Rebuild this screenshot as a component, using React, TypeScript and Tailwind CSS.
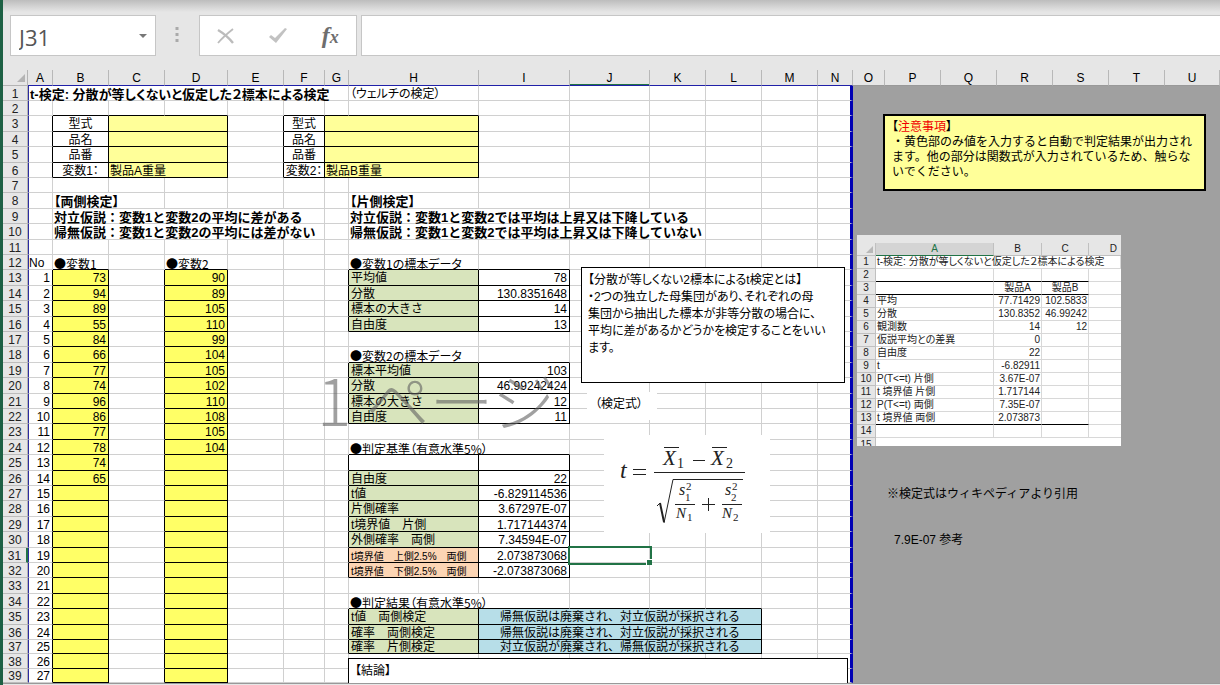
import { Fragment } from "react";

type Cell = {
  text?: string;
  span?: number;
  boxed?: boolean;
  className?: string;
};

const COLUMNS = "ABCDEFGHIJKLMNOPQRSTU".split("");
const SHEET_COLUMNS = COLUMNS.slice(0, 14);

const COLUMN_WIDTHS = [
  "w-[25px]",
  "w-[25px]",
  "w-[56px]",
  "w-[56px]",
  "w-[63px]",
  "w-[56px]",
  "w-[41px]",
  "w-[24px]",
  "w-[130px]",
  "w-[91px]",
  "w-[80px]",
  "w-[56px]",
  "w-[56px]",
  "w-[56px]",
  "w-[35px]",
  "w-[32px]",
  "w-[56px]",
  "w-[56px]",
  "w-[56px]",
  "w-[56px]",
  "w-[56px]",
  "",
];

// row heights repeat every five rows
const ROW_HEIGHTS = ["h-[15px]", "h-[15px]", "h-[16px]", "h-[15px]", "h-[16px]"];
const ROWS = Array.from({ length: 39 }, (_, i) => i + 1);

const rowHeight = (row: number) => {
  if (row === 37 || row === 39) return "h-[14px]";
  if (row > 35) return "h-[15px]";
  return ROW_HEIGHTS[(row - 1) % 5];
};

const PALE = "bg-[#ffff99] px-px";
const INPUT = "bg-[#ffff66] text-right px-[2px]";
const LABEL = "bg-[#d8e4bc] px-[2px]";
const LIMIT = "bg-[#fcd5b4] text-[10px] px-[2px]";
const RESULT = "bg-[#b7dee8] text-center px-[2px]";
const VALUE = "text-right px-[2px]";
const NARROW = "px-px [font-feature-settings:'palt']";
const HEADING =
  "px-px font-['Noto_Sans_CJK_JP',sans-serif] [font-feature-settings:'palt']";
const BOLD = "px-px font-bold text-[13px]";
const BOLD_NARROW = "px-px font-bold text-[13px] [font-feature-settings:'palt']";

const variable1 = [73, 94, 89, 55, 84, 66, 77, 74, 96, 86, 77, 78, 74, 65];
const variable2 = [90, 89, 105, 110, 99, 104, 105, 102, 110, 108, 105, 104];

const cells: Record<string, Cell> = {
  A1: {
    text: "t-検定: 分散が等しくないと仮定した２標本による検定",
    span: 7,
    className: BOLD_NARROW,
  },
  H1: { text: "（ウェルチの検定）", className: NARROW },
  B8: { text: "【両側検定】", span: 2, className: BOLD_NARROW },
  B9: { text: "対立仮説：変数1と変数2の平均に差がある", span: 5, className: BOLD },
  B10: { text: "帰無仮説：変数1と変数2の平均には差がない", span: 5, className: BOLD },
  H8: { text: "【片側検定】", className: BOLD_NARROW },
  H9: {
    text: "対立仮説：変数1と変数2では平均は上昇又は下降している",
    span: 4,
    className: BOLD,
  },
  H10: {
    text: "帰無仮説：変数1と変数2では平均は上昇又は下降していない",
    span: 4,
    className: BOLD,
  },
  A12: { text: "No", className: "px-0" },
  B12: { text: "●変数1", className: HEADING },
  D12: { text: "●変数2", className: HEADING },
  H12: { text: "●変数1の標本データ", className: HEADING },
  H18: { text: "●変数2の標本データ", className: HEADING },
  H24: { text: "●判定基準（有意水準5%）", span: 2, className: HEADING },
  H34: { text: "●判定結果（有意水準5%）", span: 2, className: HEADING },
};

["型式", "品名", "品番", "変数"].forEach((name, i) => {
  const row = i + 3;
  const last = i === 3;
  cells[`B${row}`] = {
    text: last ? "変数1：" : name,
    boxed: true,
    className: "px-0 text-center [font-feature-settings:'palt']",
  };
  cells[`C${row}`] = {
    text: last ? "製品A重量" : "",
    span: 2,
    boxed: true,
    className: PALE,
  };
  cells[`F${row}`] = {
    text: last ? "変数2：" : name,
    boxed: true,
    className: "px-0 text-center [font-feature-settings:'palt']",
  };
  cells[`G${row}`] = {
    text: last ? "製品B重量" : "",
    span: 2,
    boxed: true,
    className: PALE,
  };
});

for (let row = 13; row <= 39; row++) {
  const n = row - 13;
  cells[`A${row}`] = { text: String(n + 1), className: VALUE };
  cells[`B${row}`] = { text: variable1[n]?.toString(), boxed: true, className: INPUT };
  cells[`D${row}`] = { text: variable2[n]?.toString(), boxed: true, className: INPUT };
}

const addBlock = (start: number, rows: [string, string, string?][]) => {
  rows.forEach(([label, value, style], i) => {
    cells[`H${start + i}`] = { text: label, boxed: true, className: style ?? LABEL };
    cells[`I${start + i}`] = { text: value, boxed: true, className: VALUE };
  });
};

addBlock(13, [
  ["平均値", "78"],
  ["分散", "130.8351648"],
  ["標本の大きさ", "14"],
  ["自由度", "13"],
]);
addBlock(19, [
  ["標本平均値", "103"],
  ["分散", "46.99242424"],
  ["標本の大きさ", "12"],
  ["自由度", "11"],
]);
addBlock(25, [
  ["", "", "px-px"],
  ["自由度", "22"],
  ["t値", "-6.829114536"],
  ["片側確率", "3.67297E-07"],
  ["t境界値　片側", "1.717144374"],
  ["外側確率　両側", "7.34594E-07"],
  ["t境界値　上側2.5%　両側", "2.073873068", LIMIT],
  ["t境界値　下側2.5%　両側", "-2.073873068", LIMIT],
]);

[
  ["t値　両側検定", "帰無仮説は廃棄され、対立仮説が採択される"],
  ["確率　両側検定", "帰無仮説は廃棄され、対立仮説が採択される"],
  ["確率　片側検定", "対立仮説が廃棄され、帰無仮説が採択される"],
].forEach(([label, result], i) => {
  cells[`H${35 + i}`] = { text: label, boxed: true, className: LABEL };
  cells[`I${35 + i}`] = { text: result, span: 4, boxed: true, className: RESULT };
});

// finds the cell that covers a position, merged cells included
const cellAt = (col: number, row: number): Cell | undefined => {
  for (let i = col; i >= 0; i--) {
    const cell = cells[`${COLUMNS[i]}${row}`];
    if (cell && i + (cell.span ?? 1) > col) return cell;
  }
  return undefined;
};

const SheetRow = ({ row }: { row: number }) => {
  const items = [];
  for (let col = 0; col < SHEET_COLUMNS.length; ) {
    const cell = cellAt(col, row) ?? {};
    const span = cell.span ?? 1;
    const right = cell.boxed || cellAt(col + span, row)?.boxed;
    const bottom = cell.boxed || cellAt(col, row + 1)?.boxed;
    const lastCol = col + span === SHEET_COLUMNS.length;
    const selected = SHEET_COLUMNS[col] === "J" && row === 31;
    items.push(
      <td
        key={col}
        colSpan={span}
        className={[
          "border-b pt-[2px] pb-0 whitespace-nowrap",
          lastCol ? "border-r-[3px] border-r-[#0000b4]" : "border-r",
          !lastCol && (right ? "border-r-black" : "border-r-[#d0d0d0]"),
          bottom ? "border-b-black" : "border-b-[#d0d0d0]",
          col === 0 && "border-l border-l-[#2c2ca0]",
          selected && "relative outline-2 outline-[#217346]",
          cell.className ?? "px-0",
        ]
          .filter(Boolean)
          .join(" ")}
      >
        {cell.text}
        {selected && (
          <span className="absolute -right-[3px] -bottom-[3px] size-[6px] border-t border-l border-white bg-[#217346]" />
        )}
      </td>
    );
    col += span;
  }
  return <Fragment>{items}</Fragment>;
};

const toolpakRows = [
  ["t-検定: 分散が等しくないと仮定した２標本による検定"],
  ["", "", ""],
  ["", "製品A", "製品B"],
  ["平均", "77.71429", "102.5833"],
  ["分散", "130.8352", "46.99242"],
  ["観測数", "14", "12"],
  ["仮説平均との差異", "0", ""],
  ["自由度", "22", ""],
  ["t", "-6.82911", ""],
  ["P(T<=t) 片側", "3.67E-07", ""],
  ["t 境界値 片側", "1.717144", ""],
  ["P(T<=t) 両側", "7.35E-07", ""],
  ["t 境界値 両側", "2.073873", ""],
  ["", "", ""],
];

const lineUnder = (row: number, col: number) =>
  (row === 2 || row === 3 || row === 13) && col < 3
    ? "border-b-black"
    : "border-b-[#d8d8d8]";

const ToolpakTable = () => (
  <div className="h-[211px] w-[264px] overflow-hidden bg-[#e6e6e6] pt-[8px]">
    <table className="w-full table-fixed border-separate border-spacing-0 text-[10px] leading-[12px] text-[#222] [font-feature-settings:'palt']">
      <colgroup>
        <col className="w-[19px]" />
        <col className="w-[118px]" />
        <col className="w-[48px]" />
        <col className="w-[47px]" />
        <col />
      </colgroup>
      <thead>
        <tr className="h-[13px]">
          <th className="border-r border-b border-[#c0c0c0] p-0">
            <svg viewBox="0 0 8 8" className="mr-[2px] ml-auto size-[7px]">
              <path d="M8 0v8H0z" fill="#b8b8b8" />
            </svg>
          </th>
          <th className="border-r border-b border-r-[#c0c0c0] border-b-[#217346] bg-[#d4d4d4] p-0 font-normal text-[#217346]">
            A
          </th>
          <th className="border-r border-b border-[#c0c0c0] p-0 font-normal">B</th>
          <th className="border-r border-b border-[#c0c0c0] p-0 font-normal">C</th>
          <th className="border-b border-[#c0c0c0] p-0 pr-[4px] text-right font-normal">
            D
          </th>
        </tr>
      </thead>
      <tbody>
        {toolpakRows.map((values, i) => (
          <tr key={i} className="h-[13px]">
            <th className="border-r border-b border-[#c0c0c0] p-0 font-normal">{i + 1}</th>
            {values.map((value, j) => (
              <td
                key={j}
                colSpan={values.length === 1 ? 4 : 1}
                className={`border-r border-b border-r-[#d8d8d8] bg-white px-px py-0 whitespace-nowrap ${lineUnder(i + 1, j)} ${
                  j === 0 ? "text-left" : i === 2 ? "text-center" : "text-right"
                }`}
              >
                {value}
              </td>
            ))}
            {values.length > 1 && (
              <td className="border-b border-[#d8d8d8] bg-white p-0" />
            )}
          </tr>
        ))}
        <tr className="h-[13px]">
          <th className="border-r border-[#c0c0c0] p-0 font-normal">15</th>
          <td colSpan={4} className="bg-white p-0" />
        </tr>
      </tbody>
    </table>
  </div>
);

/* Welch's t statistic */
const Formula = () => (
  <svg
    viewBox="0 0 166 98"
    className="h-[98px] w-[166px] font-['Liberation_Serif',serif]"
    fill="#222"
    role="img"
    aria-label="t検定の式"
  >
    <g fontStyle="italic">
      <text x="16" y="43" fontSize="24">t</text>
      <text x="59" y="30" fontSize="21">X</text>
      <text x="107" y="30" fontSize="21">X</text>
      <text x="75" y="60" fontSize="16">s</text>
      <text x="121" y="60" fontSize="16">s</text>
      <text x="72" y="83" fontSize="15">N</text>
      <text x="118" y="83" fontSize="15">N</text>
    </g>
    <text x="73" y="33" fontSize="14">1</text>
    <text x="122" y="33" fontSize="14">2</text>
    <text x="82" y="55" fontSize="11">2</text>
    <text x="81" y="66" fontSize="11">1</text>
    <text x="128" y="55" fontSize="11">2</text>
    <text x="127" y="66" fontSize="11">2</text>
    <text x="83" y="86" fontSize="11">1</text>
    <text x="129" y="86" fontSize="11">2</text>
    <g stroke="#222" fill="none">
      <path d="M29 34.5h13M29 39.5h13M60 12.5h15M108 12.5h15M89 25.5h12" />
      <path d="M50 37.5h91M71 69.5h20M118 69.5h20M98 69.5h13M104.5 63v13" />
      <path d="M53 71l3-3" />
      <path d="M56 68l4 19" strokeWidth="2" />
      <path d="M60 88l9-43.5h70" />
    </g>
  </svg>
);

const FormulaBar = () => (
  <header className="flex h-[70px] items-start bg-[#e6e6e6] bg-[linear-gradient(#bdbdbd,#e6e6e6_12px)] pt-[15px] pl-[7px]">
    <div className="flex h-[41px] w-[146px] items-center border border-[#c6c6c6] bg-white">
      <input
        aria-label="名前ボックス"
        defaultValue="J31"
        className="w-full min-w-0 pt-[2px] pl-[8px] font-['Open_Sans',sans-serif] text-[22px] leading-[30px] text-[#555] outline-none"
      />
      <button type="button" aria-label="名前の一覧" className="px-[8px]">
        <svg viewBox="0 0 8 4" className="h-[4px] w-[8px]">
          <path d="M0 0h8L4 4z" fill="#777" />
        </svg>
      </button>
    </div>
    <svg viewBox="0 0 4 16" className="mx-[18px] mt-[12px] h-[16px] w-[7px]" fill="#aaa">
      <path d="M0 0h3v3H0zM0 6h3v3H0zM0 12h3v3H0z" />
    </svg>
    <div className="flex h-[41px] w-[158px] items-center justify-around border border-[#c6c6c6] bg-white">
      <button type="button" aria-label="キャンセル">
        <svg viewBox="0 0 18 16" className="h-[16px] w-[18px]" fill="none" stroke="#bcbcbc">
          <path d="M1 2C6 5 12 10 16 15" strokeWidth="2.4" />
          <path d="M16 1C11 5 5 10 1 15" strokeWidth="1.8" />
        </svg>
      </button>
      <button type="button" aria-label="入力">
        <svg viewBox="0 0 18 16" className="h-[16px] w-[18px]" fill="#c2c2c2">
          <path d="M0 9l2-2 4 3L16 0l2 1L7 15z" />
        </svg>
      </button>
      <button
        type="button"
        aria-label="関数の挿入"
        className="font-['Liberation_Serif',serif] text-[24px] leading-[30px] font-bold text-[#6e6e6e] italic"
      >
        f<span className="text-[18px]">x</span>
      </button>
    </div>
    <input
      aria-label="数式バー"
      className="ml-[4px] h-[41px] min-w-0 flex-1 border border-r-0 border-[#c6c6c6] bg-white px-2 outline-none"
    />
  </header>
);

const App = () => {
  return (
    <div className="min-w-[1100px] overflow-hidden border-l-[3px] border-[#1d6044] bg-[#e6e6e6] font-['Liberation_Sans','Noto_Sans_CJK_JP',sans-serif] text-black">
      <FormulaBar />

      <main className="relative">
        <table className="w-full table-fixed border-separate border-spacing-0 bg-white text-[12px] leading-[11px]">
          <colgroup>
            {COLUMN_WIDTHS.map((width, i) => (
              <col key={i} className={width} />
            ))}
          </colgroup>
          <thead className="bg-[#e6e6e6]">
            <tr className="h-[16px]">
              <th className="border-r border-b border-[#b4b4b4] p-0">
                <svg viewBox="0 0 8 8" className="mr-[2px] ml-auto size-[8px]">
                  <path d="M8 0v8H0z" fill="#b4b4b4" />
                </svg>
              </th>
              {COLUMNS.map((name, i) => (
                <th
                  key={name}
                  className={`border-r border-r-[#b8b8b8] p-0 pt-[2px] font-normal ${
                    i < 14 ? "border-b border-b-[#2020a8]" : "border-b border-b-[#999]"
                  } ${name === "J" ? "shadow-[inset_0_-1px_0_#217346]" : ""}`}
                >
                  {name}
                </th>
              ))}
            </tr>
          </thead>
          <tbody>
            {ROWS.map((row) => (
              <tr key={row} className={rowHeight(row)}>
                <th
                  className={`border-r border-b border-b-[#bcbcbc] bg-[#e6e6e6] p-0 pt-[2px] font-normal text-[#222] ${
                    row === 31 ? "border-r-2 border-r-[#217346]" : "border-r-[#b4b4b4]"
                  }`}
                >
                  {row}
                </th>
                <SheetRow row={row} />
                {/* area outside the print range */}
                {row === 1 && (
                  <td colSpan={7} rowSpan={39} className="bg-[#a0a0a0] p-0 align-top">
                    <div className="mt-[28px] ml-[30px] h-[77px] w-[323px] border-2 border-black bg-[#ffff99] px-[7px] py-[4px] leading-[15px] whitespace-nowrap">
                      <p className="[font-feature-settings:'palt']">
                        【<span className="text-[#f00000]">注意事項</span>】
                      </p>
                      <p>・黄色部のみ値を入力すると自動で判定結果が出力され</p>
                      <p>ます。他の部分は関数式が入力されているため、触らな</p>
                      <p>いでください。</p>
                    </div>
                    <div className="mt-[44px] ml-[4px]">
                      <ToolpakTable />
                    </div>
                    <p className="mt-[40px] ml-[34px] leading-[16px]">
                      ※検定式はウィキペディアより引用
                    </p>
                    <p className="mt-[30px] ml-[41px] leading-[16px]">7.9E-07 参考</p>
                  </td>
                )}
              </tr>
            ))}
          </tbody>
        </table>

        {/* page number watermark */}
        <p className="pointer-events-none absolute top-[296px] left-[314px] font-['Noto_Sans_CJK_JP',sans-serif] text-[64px] leading-[64px] font-light whitespace-nowrap text-[#606060]/60">
          1 ページ
        </p>

        {/* text boxes placed over the sheet */}
        <div className="absolute top-[197px] left-[578px] h-[116px] w-[264px] border border-black bg-white px-[6px] py-[4px] text-[12px] leading-[17px] whitespace-nowrap [font-feature-settings:'palt']">
          <p>【分散が等しくない2標本によるt検定とは】</p>
          <p>・2つの独立した母集団があり、それぞれの母</p>
          <p>集団から抽出した標本が非等分散の場合に、</p>
          <p>平均に差があるかどうかを検定することをいい</p>
          <p>ます。</p>
        </div>
        <p className="absolute top-[322px] left-[584px] h-[28px] w-[70px] bg-white px-[8px] text-[12px] leading-[24px] [font-feature-settings:'palt']">
          （検定式）
        </p>
        <div className="absolute top-[365px] left-[601px] bg-white">
          <Formula />
        </div>
        <div className="absolute top-[588px] bottom-0 left-[345px] w-[500px] border border-b-0 border-black bg-white px-[6px] pt-[4px] text-[12px] leading-[16px] [font-feature-settings:'palt']">
          【結論】
        </div>
      </main>

      <footer className="h-[2px] border-t border-[#999] bg-[#e6e6e6]" />
    </div>
  );
};

export default App;
